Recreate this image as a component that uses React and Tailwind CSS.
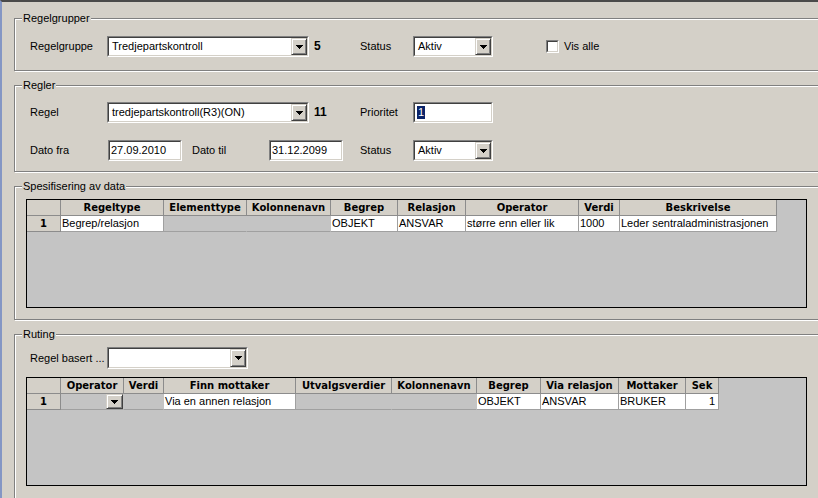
import React from "react";

function Arrow() {
  return (
    <svg width="7" height="4" viewBox="0 0 7 4" shapeRendering="crispEdges">
      <path d="M0 0h7v1H0zM1 1h5v1H1zM2 2h3v1H2zM3 3h1v1H3z" fill="#000" />
    </svg>
  );
}

function DropBtn({ className }) {
  return (
    <div
      className={`flex items-center justify-center bg-[#d4d0c8] border border-t-[#d4d0c8] border-l-[#d4d0c8] border-r-[#404040] border-b-[#404040] shadow-[inset_1px_1px_0_#fff,inset_-1px_-1px_0_#808080] ${className}`}
    >
      <Arrow />
    </div>
  );
}

function Sunken({ className, children }) {
  return (
    <div
      className={`shrink-0 border border-t-[#808080] border-l-[#808080] border-r-white border-b-white ${className}`}
    >
      <div className="h-full w-full border border-t-[#404040] border-l-[#404040] border-r-[#d4d0c8] border-b-[#d4d0c8] bg-white flex items-center overflow-hidden">
        {children}
      </div>
    </div>
  );
}

function Combo({ className, text }) {
  return (
    <Sunken className={className}>
      <span className="flex-1 pl-[3px] whitespace-nowrap overflow-hidden">{text}</span>
      <DropBtn className="w-[16px] h-full shrink-0" />
    </Sunken>
  );
}

function Check({ className }) {
  return (
    <div
      className={`w-[13px] h-[13px] shrink-0 border border-t-[#808080] border-l-[#808080] border-r-white border-b-white ${className}`}
    >
      <div className="h-full w-full border border-t-[#404040] border-l-[#404040] border-r-[#d4d0c8] border-b-[#d4d0c8] bg-white" />
    </div>
  );
}

function Group({ title, className, children }) {
  return (
    <div
      className={`relative ml-[12px] w-[830px] border border-[#808080] shadow-[inset_1px_1px_0_#fff,1px_1px_0_#fff] ${className}`}
    >
      <span className="absolute left-[7px] -top-[7px] bg-[#d4d0c8] px-[1px] leading-[13px] whitespace-nowrap">
        {title}
      </span>
      {children}
    </div>
  );
}

const hdrCell =
  "h-[16px] shrink-0 flex items-center justify-center bg-[#d4d0c8] border-r border-b border-[#8c8c8c] font-['DejaVu_Sans',sans-serif] font-bold text-[10px] whitespace-nowrap overflow-hidden";
const dataCell =
  "h-[16px] shrink-0 flex items-center border-b border-[#a0a0a0] whitespace-nowrap overflow-hidden";

function Grid({ cols }) {
  return (
    <div className="w-[781px] h-[109px] border border-black bg-[#c4c4c4] overflow-hidden">
      <div className="flex">
        <div className={`${hdrCell} w-[34px]`} />
        {cols.map((c) => (
          <div key={c.title} className={`${hdrCell} ${c.w}`}>
            {c.title}
          </div>
        ))}
      </div>
      <div className="flex">
        <div className={`${hdrCell} w-[34px]`}>1</div>
        {cols.map((c) => (
          <div
            key={c.title}
            className={`${dataCell} ${c.w} ${
              c.white ? "bg-white border-r" : "border-r border-r-transparent"
            } ${c.right ? "justify-end pr-[3px]" : "pl-[1px]"} ${
              c.btn ? "justify-end" : ""
            }`}
          >
            {c.btn ? <DropBtn className="w-[17px] h-[15px]" /> : c.text}
          </div>
        ))}
      </div>
    </div>
  );
}

const specCols = [
  { title: "Regeltype", w: "w-[103px]", text: "Begrep/relasjon", white: true },
  { title: "Elementtype", w: "w-[83px]" },
  { title: "Kolonnenavn", w: "w-[84px]" },
  { title: "Begrep", w: "w-[67px]", text: "OBJEKT", white: true },
  { title: "Relasjon", w: "w-[68px]", text: "ANSVAR", white: true },
  { title: "Operator", w: "w-[113px]", text: "større enn eller lik", white: true },
  { title: "Verdi", w: "w-[41px]", text: "1000", white: true },
  { title: "Beskrivelse", w: "w-[157px]", text: "Leder sentraladministrasjonen", white: true },
];

const rutCols = [
  { title: "Operator", w: "w-[63px]", btn: true },
  { title: "Verdi", w: "w-[40px]" },
  { title: "Finn mottaker", w: "w-[132px]", text: "Via en annen relasjon", white: true },
  { title: "Utvalgsverdier", w: "w-[96px]" },
  { title: "Kolonnenavn", w: "w-[85px]" },
  { title: "Begrep", w: "w-[64px]", text: "OBJEKT", white: true },
  { title: "Via relasjon", w: "w-[78px]", text: "ANSVAR", white: true },
  { title: "Mottaker", w: "w-[67px]", text: "BRUKER", white: true },
  { title: "Sek", w: "w-[33px]", text: "1", white: true, right: true },
];

export default function App() {
  return (
    <div className="w-[818px] h-[498px] overflow-hidden bg-[#d4d0c8] border-t-2 border-t-[#4a4a4a] border-l-2 border-l-[#8496c4] font-['Liberation_Sans',Arial,sans-serif] text-[11px] leading-[13px] text-black">
      <Group title="Regelgrupper" className="mt-[16px] h-[53px]">
        <div className="flex items-center pl-[15px] pt-[17px]">
          <span className="w-[77px] shrink-0">Regelgruppe</span>
          <Combo className="w-[202px] h-[21px]" text="Tredjepartskontroll" />
          <span className="w-[51px] shrink-0 pl-[5px] font-bold text-[12px]">5</span>
          <span className="w-[53px] shrink-0">Status</span>
          <Combo className="w-[80px] h-[21px]" text="Aktiv" />
          <Check className="ml-[53px]" />
          <span className="ml-[5px] whitespace-nowrap">Vis alle</span>
        </div>
      </Group>

      <Group title="Regler" className="mt-[14px] h-[87px]">
        <div className="flex items-center pl-[15px] pt-[16px]">
          <span className="w-[77px] shrink-0">Regel</span>
          <Combo className="w-[202px] h-[21px]" text="tredjepartskontroll(R3)(ON)" />
          <span className="w-[51px] shrink-0 pl-[5px] font-bold text-[12px]">11</span>
          <span className="w-[53px] shrink-0">Prioritet</span>
          <Sunken className="w-[80px] h-[21px]">
            <span className="ml-[2px] bg-[#0a246a] text-white leading-[13px] px-[1px]">1</span>
          </Sunken>
        </div>
        <div className="flex items-center pl-[15px] mt-[17px]">
          <span className="w-[78px] shrink-0">Dato fra</span>
          <Sunken className="w-[74px] h-[21px]">
            <span className="pl-[1px]">27.09.2010</span>
          </Sunken>
          <span className="ml-[10px] w-[77px] shrink-0">Dato til</span>
          <Sunken className="w-[74px] h-[21px]">
            <span className="pl-[1px]">31.12.2099</span>
          </Sunken>
          <span className="ml-[17px] w-[53px] shrink-0">Status</span>
          <Combo className="w-[80px] h-[21px]" text="Aktiv" />
        </div>
      </Group>

      <Group title="Spesifisering av data" className="mt-[14px] h-[134px]">
        <div className="pt-[12px] pl-[11px]">
          <Grid cols={specCols} />
        </div>
      </Group>

      <Group title="Ruting" className="mt-[14px] h-[200px]">
        <div className="flex items-center pl-[15px] pt-[12px]">
          <span className="w-[77px] shrink-0 whitespace-nowrap">Regel basert ...</span>
          <Combo className="w-[141px] h-[22px]" text="" />
        </div>
        <div className="pt-[8px] pl-[11px]">
          <Grid cols={rutCols} />
        </div>
      </Group>
    </div>
  );
}
